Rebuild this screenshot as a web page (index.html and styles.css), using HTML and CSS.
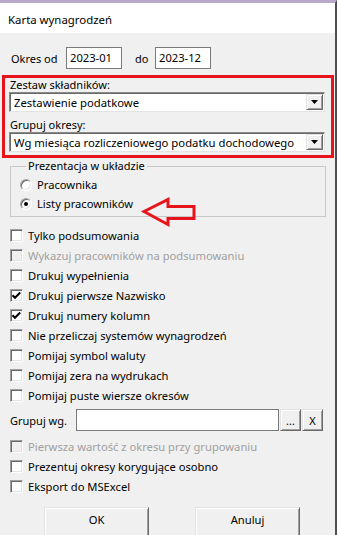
FILE: index.html
```html
<!DOCTYPE html>
<html lang="pl">
<head>
<meta charset="utf-8">
<title>Karta wynagrodzeń</title>
<link rel="stylesheet" href="styles.css">
</head>
<body>
<div class="win">
  <div class="titlebar">Karta wynagrodzeń</div>
  <div class="content">
    <div class="period">
      <span class="period-lbl">Okres od</span>
      <div class="edit edit-date">2023-01</div>
      <span class="period-do">do</span>
      <div class="edit edit-date">2023-12</div>
    </div>

    <div class="redbox">
      <div class="lbl">Zestaw składników:</div>
      <div class="combo">
        <span class="combo-text">Zestawienie podatkowe</span>
        <span class="dd"><svg width="7" height="4" viewBox="0 0 7 4"><path d="M0 0h7L3.5 4z" fill="#000"/></svg></span>
      </div>
      <div class="lbl lbl-gap">Grupuj okresy:</div>
      <div class="combo">
        <span class="combo-text">Wg miesiąca rozliczeniowego podatku dochodowego</span>
        <span class="dd"><svg width="7" height="4" viewBox="0 0 7 4"><path d="M0 0h7L3.5 4z" fill="#000"/></svg></span>
      </div>
    </div>

    <fieldset class="group">
      <legend>Prezentacja w układzie</legend>
      <div class="radio-row"><span class="rb"></span>Pracownika</div>
      <div class="radio-row"><span class="rb on"></span>Listy pracowników</div>
    </fieldset>

    <div class="checks">
      <div class="ck-row"><span class="cb"></span>Tylko podsumowania</div>
      <div class="ck-row disabled"><span class="cb"></span>Wykazuj pracowników na podsumowaniu</div>
      <div class="ck-row"><span class="cb"></span>Drukuj wypełnienia</div>
      <div class="ck-row"><span class="cb"><svg width="11" height="11" viewBox="0 0 11 11"><path d="M1.5 5.2 4 7.8 9.2 2.5" fill="none" stroke="#000" stroke-width="2"/></svg></span>Drukuj pierwsze Nazwisko</div>
      <div class="ck-row"><span class="cb"><svg width="11" height="11" viewBox="0 0 11 11"><path d="M1.5 5.2 4 7.8 9.2 2.5" fill="none" stroke="#000" stroke-width="2"/></svg></span>Drukuj numery kolumn</div>
      <div class="ck-row"><span class="cb"></span>Nie przeliczaj systemów wynagrodzeń</div>
      <div class="ck-row"><span class="cb"></span>Pomijaj symbol waluty</div>
      <div class="ck-row"><span class="cb"></span>Pomijaj zera na wydrukach</div>
      <div class="ck-row"><span class="cb"></span>Pomijaj puste wiersze okresów</div>
    </div>

    <div class="grp-row">
      <span class="grp-lbl">Grupuj wg.</span>
      <div class="edit edit-grp"></div>
      <span class="sbtn">...</span>
      <span class="sbtn">X</span>
    </div>

    <div class="checks checks-2">
      <div class="ck-row disabled"><span class="cb"></span>Pierwsza wartość z okresu przy grupowaniu</div>
      <div class="ck-row"><span class="cb"></span>Prezentuj okresy korygujące osobno</div>
      <div class="ck-row"><span class="cb"></span>Eksport do MSExcel</div>
    </div>

    <div class="buttons">
      <span class="btn btn-ok">OK</span>
      <span class="btn btn-cancel">Anuluj</span>
    </div>
  </div>

  <svg class="arrow" width="60" height="32" viewBox="0 0 60 32">
    <path d="M3 14.5 27 2.5V9.5H53V21.5H27V27.5Z" fill="none" stroke="#e8141c" stroke-width="3"/>
  </svg>
</div>
</body>
</html>
```

FILE: styles.css
```css
html, body {
  margin: 0;
  padding: 0;
  background: #f0f0f0;
}

.win {
  position: relative;
  width: 337px;
  height: 535px;
  box-sizing: border-box;
  overflow: hidden;
  border-top: 3px solid #b8a9ca;
  border-right: 2px solid #4f4e56;
  background: #f0f0f0;
  font-family: "Noto Sans", "Open Sans", sans-serif;
  font-size: 11.2px;
  color: #000;
}

.titlebar {
  height: 27px;
  padding-top: 3px;
  padding-left: 8px;
  line-height: 27px;
  background: #fff;
  font-size: 11.4px;
}

/* period row */
.period {
  display: flex;
  align-items: center;
  height: 22px;
  margin-top: 14px;
  padding-left: 11px;
}
.period-lbl { width: 55px; font-size: 11px; }
.period-do { width: 20px; margin-left: 13px; font-size: 11px; }

.edit {
  box-sizing: border-box;
  height: 22px;
  background: #fff;
  border: 1px solid #7a7a7a;
  padding-left: 3px;
  line-height: 20px;
}
.edit-date { width: 56px; }

/* red highlight box */
.redbox {
  box-sizing: border-box;
  width: 332px;
  margin: 6px 0 0 2px;
  border: 3px solid #e8141c;
  padding-bottom: 3px;
}
.lbl {
  height: 14px;
  line-height: 14px;
  padding-left: 5px;
  font-size: 11px;
}
.lbl-gap { margin-top: 6px; }

.combo {
  box-sizing: border-box;
  display: flex;
  align-items: center;
  width: 316px;
  height: 20px;
  margin-left: 4px;
  background: #fff;
  border: 1px solid;
  border-color: #8a8a8a #e3e3e3 #e3e3e3 #8a8a8a;
  box-shadow: inset 1px 1px 0 #696969;
  padding: 1px;
}
.combo-text {
  flex: 1;
  padding-left: 3px;
  font-size: 11.3px;
  white-space: nowrap;
  overflow: hidden;
}
.dd {
  box-sizing: border-box;
  display: flex;
  align-items: center;
  justify-content: center;
  width: 17px;
  height: 16px;
  background: #f0f0f0;
  border: 1px solid;
  border-color: #e3e3e3 #696969 #696969 #e3e3e3;
  box-shadow: inset 1px 1px 0 #fff, inset -1px -1px 0 #a0a0a0;
}

/* group box */
.group {
  box-sizing: border-box;
  width: 316px;
  margin: 1px 0 0 10px;
  padding: 2px 0 3px 9px;
  border: 1px solid #c8c8c8;
  min-width: 0;
}
.group legend {
  margin-left: 6px;
  padding: 0 2px;
  line-height: 14px;
  font-size: 11px;
}
.radio-row {
  display: flex;
  align-items: center;
  height: 19px;
}
.rb {
  position: relative;
  box-sizing: border-box;
  width: 12px;
  height: 12px;
  margin-right: 5px;
  border-radius: 50%;
  background: #fff;
  border: 1px solid;
  border-color: #a0a0a0 #fff #fff #a0a0a0;
  box-shadow: inset 1px 1px 0 #696969, inset -1px -1px 0 #e3e3e3;
}
.rb.on::after {
  content: "";
  position: absolute;
  left: 3px;
  top: 3px;
  width: 4px;
  height: 4px;
  border-radius: 50%;
  background: #000;
}

/* checkboxes */
.checks { margin-top: 8px; }
.checks-2 { margin-top: 5px; }
.ck-row {
  display: flex;
  align-items: center;
  height: 20px;
  padding-left: 10px;
  white-space: nowrap;
}
.cb {
  box-sizing: border-box;
  display: flex;
  align-items: center;
  justify-content: center;
  width: 13px;
  height: 13px;
  margin-right: 5px;
  background: #fff;
  border: 1px solid;
  border-color: #a0a0a0 #fff #fff #a0a0a0;
  box-shadow: inset 1px 1px 0 #696969, inset -1px -1px 0 #e3e3e3;
}
.ck-row.disabled { color: #a0a0a0; }
.ck-row.disabled .cb { background: #f0f0f0; }

/* group by row */
.grp-row {
  display: flex;
  align-items: center;
  height: 22px;
  margin-top: 4px;
  padding-left: 10px;
}
.grp-lbl { width: 66px; font-size: 11px; }
.edit-grp { width: 203px; }
.sbtn {
  box-sizing: border-box;
  display: flex;
  align-items: center;
  justify-content: center;
  width: 21px;
  height: 22px;
  margin-left: 1px;
  background: #f0f0f0;
  border: 1px solid;
  border-color: #e3e3e3 #696969 #696969 #e3e3e3;
  box-shadow: inset 1px 1px 0 #fff, inset -1px -1px 0 #a0a0a0;
  font-size: 11px;
}
.sbtn:first-of-type { margin-left: 0; }

/* bottom buttons (cut off by the window bottom, as in the capture) */
.buttons {
  display: flex;
  margin-top: 11px;
  padding-left: 44px;
  gap: 46px;
}
.btn {
  box-sizing: border-box;
  display: flex;
  align-items: center;
  justify-content: center;
  width: 105px;
  height: 30px;
  padding-bottom: 5px;
  background: #f0f0f0;
  border: 1px solid;
  border-color: #e3e3e3 #696969 #696969 #e3e3e3;
  box-shadow: inset 1px 1px 0 #fff, inset -1px -1px 0 #a0a0a0;
  font-size: 11.2px;
}

/* annotation arrow overlay */
.arrow {
  position: absolute;
  left: 141px;
  top: 194px;
  pointer-events: none;
}
```
